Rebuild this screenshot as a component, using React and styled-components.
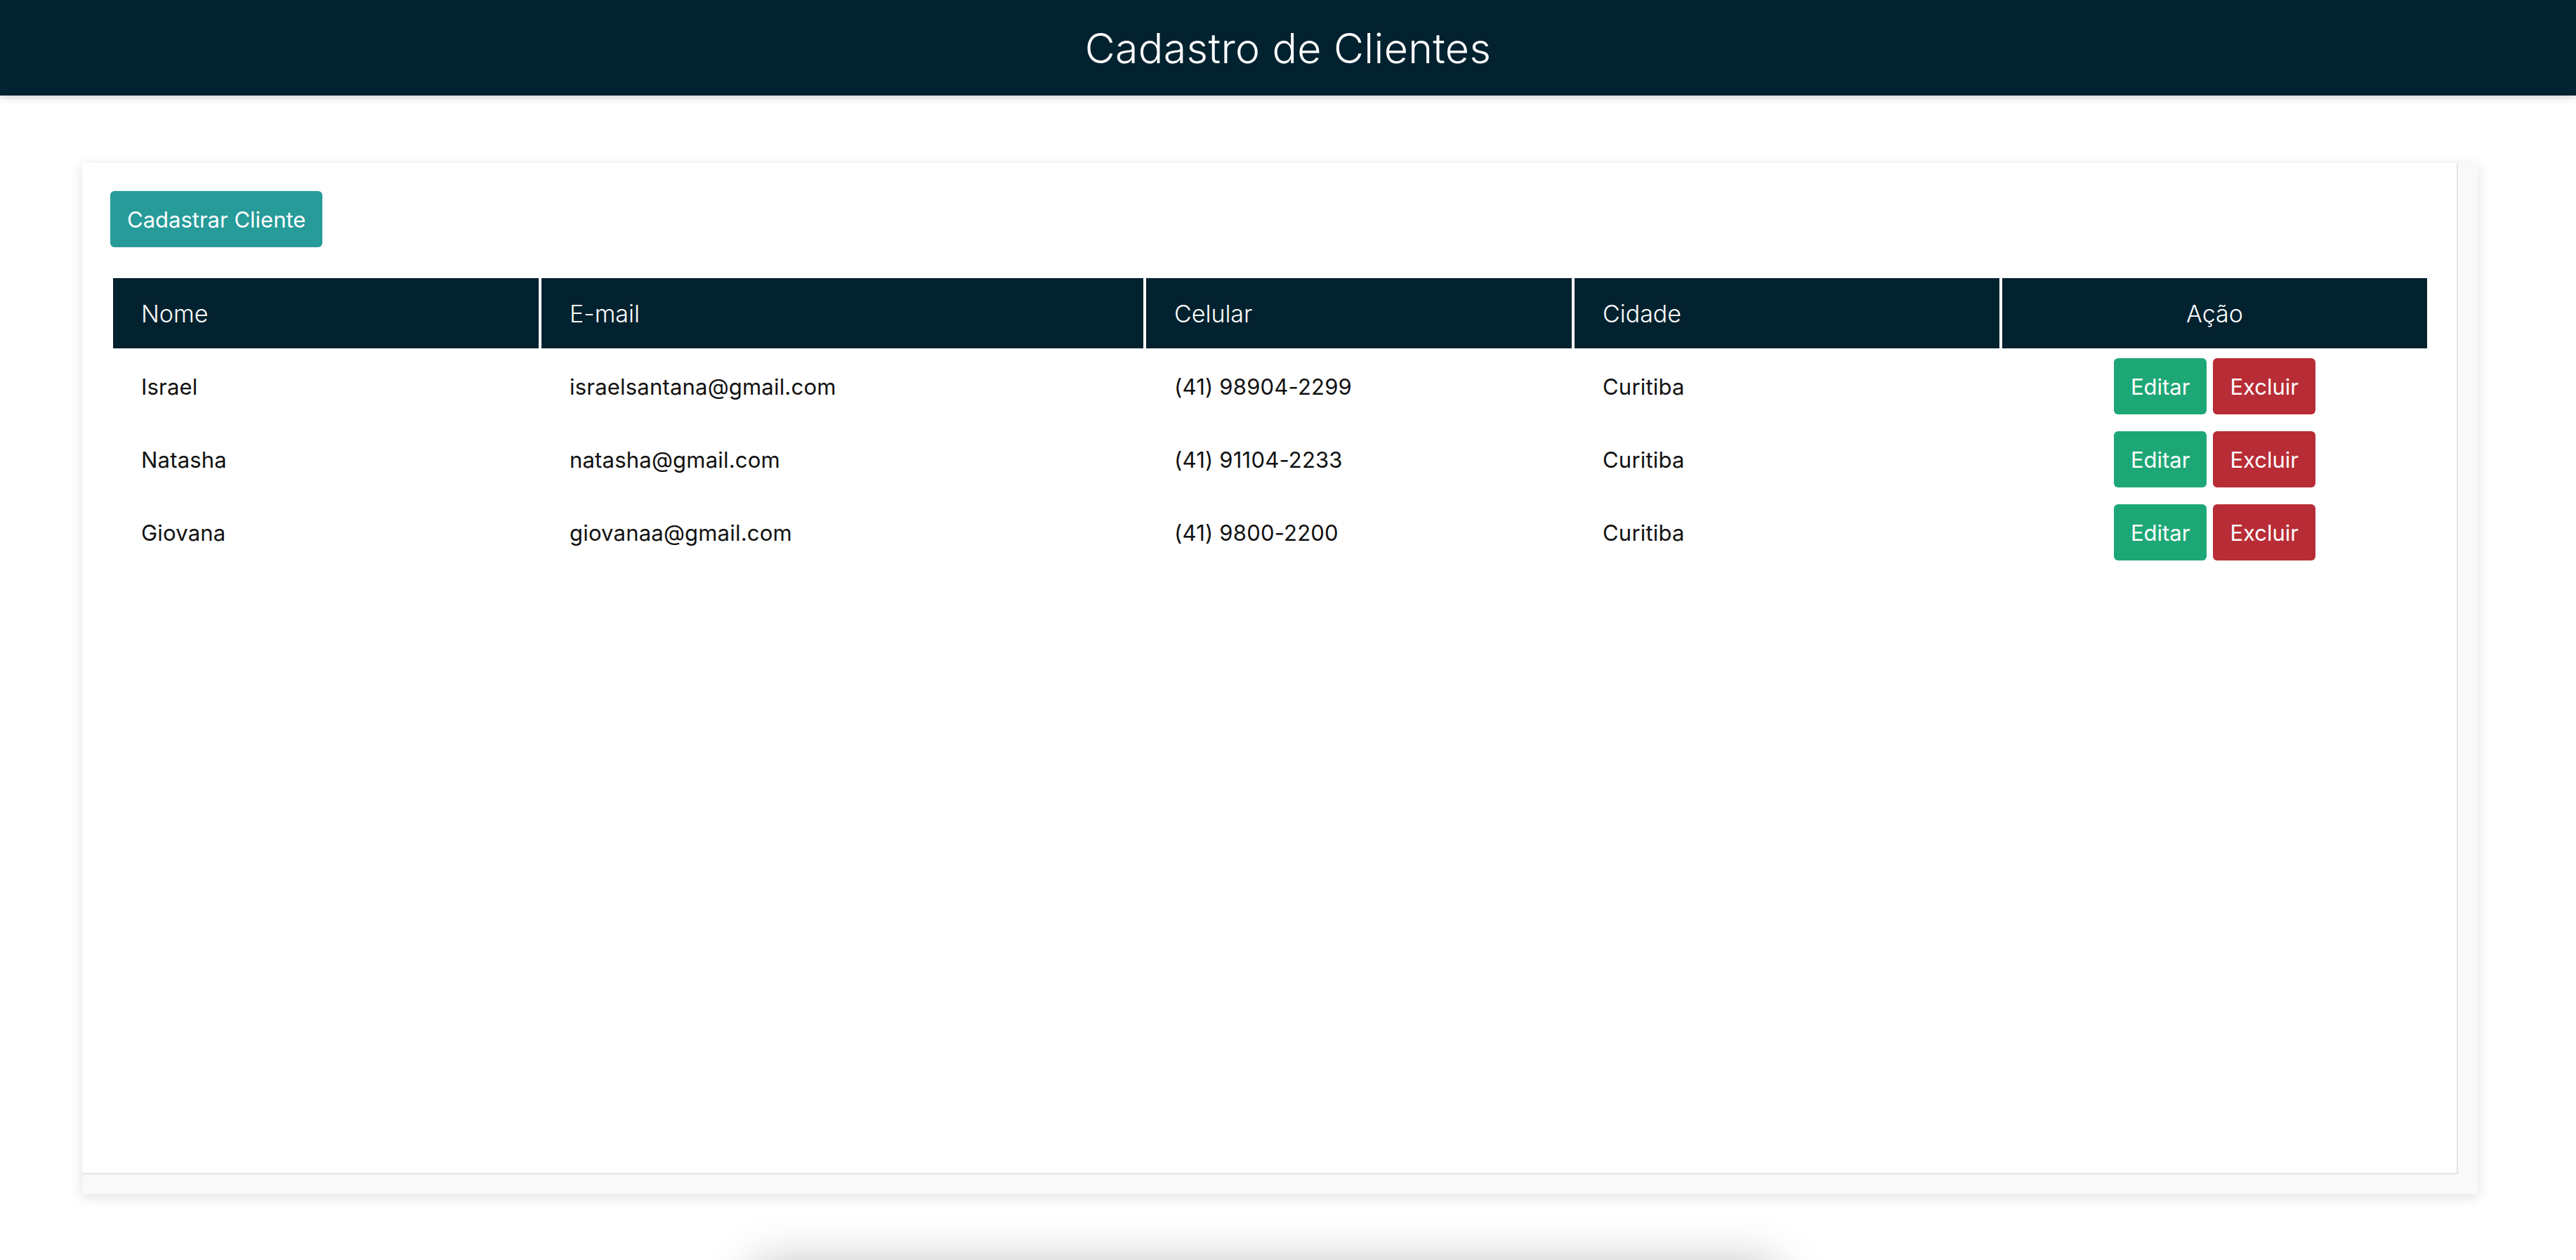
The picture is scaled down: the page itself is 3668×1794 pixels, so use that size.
import React from "react";
import styled, { createGlobalStyle } from "styled-components";

const GlobalStyle = createGlobalStyle`
  body {
    margin: 0;
    background: #ffffff;
    font-family: "Inter", "Liberation Sans", sans-serif;
    overflow: hidden;
  }
`;

const Header = styled.header`
  height: 136px;
  background: #03222f;
  box-shadow: 0 3px 10px rgba(0, 0, 0, 0.18);
  display: flex;
  align-items: center;
  justify-content: center;
`;

const Title = styled.h1`
  margin: 0;
  color: #ffffff;
  font-family: "Inter", "Liberation Sans", sans-serif;
  font-size: 59px;
  font-weight: 300;
  letter-spacing: 0.4px;
`;

const Main = styled.main`
  padding: 96px 140px 0 117px;
`;

const Card = styled.section`
  background: #f9f9f9;
  padding: 0 28px 28px 0;
  box-shadow: 0 4px 18px rgba(0, 0, 0, 0.12);
`;

const Panel = styled.div`
  background: #ffffff;
  height: 1440px;
  box-sizing: border-box;
  padding: 40px 38px 40px 40px;
  border-right: 2px solid #e4e4e4;
  border-bottom: 2px solid #e4e4e4;
`;

const Button = styled.button`
  font-family: "Inter", "Roboto", sans-serif;
  font-size: 31px;
  font-weight: 400;
  color: #ffffff;
  background: ${(p) => p.$bg};
  border: none;
  border-radius: 6px;
  height: 80px;
  padding: 0 24px;
  cursor: pointer;
`;

const AddButton = styled(Button)`
  margin-bottom: 40px;
`;

const Table = styled.table`
  width: 100%;
  table-layout: fixed;
  border-collapse: separate;
  border-spacing: 4px;
`;

const Th = styled.th`
  background: #03222f;
  color: #ffffff;
  height: 100px;
  padding: 0 40px;
  font-family: "Inter", "Liberation Sans", sans-serif;
  font-size: 34px;
  font-weight: 300;
  text-align: ${(p) => (p.$center ? "center" : "left")};
`;

const Td = styled.td`
  height: 100px;
  padding: 0 40px;
  font-size: 31px;
  font-weight: 400;
  color: #111111;
  letter-spacing: 0.2px;
  text-align: ${(p) => (p.$center ? "center" : "left")};
`;

const Actions = styled.div`
  display: flex;
  justify-content: center;
  gap: 9px;
`;

const Shade = styled.div`
  width: 1450px;
  height: 200px;
  margin: 112px 0 0 960px;
  background: #ffffff;
  box-shadow: 0 -8px 70px rgba(0, 0, 0, 0.3);
`;

const clients = [
  { nome: "Israel", email: "israelsantana@gmail.com", cel: "(41) 98904-2299", cidade: "Curitiba" },
  { nome: "Natasha", email: "natasha@gmail.com", cel: "(41) 91104-2233", cidade: "Curitiba" },
  { nome: "Giovana", email: "giovanaa@gmail.com", cel: "(41) 9800-2200", cidade: "Curitiba" },
];

const App = () => {
  return (
    <>
      <GlobalStyle />
      <Header>
        <Title>Cadastro de Clientes</Title>
      </Header>
      <Main>
        <Card>
          <Panel>
            <AddButton $bg="#269b99">Cadastrar Cliente</AddButton>
            <Table>
              <colgroup>
                <col style={{ width: "606px" }} />
                <col />
                <col style={{ width: "606px" }} />
                <col style={{ width: "605px" }} />
                <col style={{ width: "605px" }} />
              </colgroup>
              <thead>
                <tr>
                  <Th>Nome</Th>
                  <Th>E-mail</Th>
                  <Th>Celular</Th>
                  <Th>Cidade</Th>
                  <Th $center>Ação</Th>
                </tr>
              </thead>
              <tbody>
                {clients.map((c) => (
                  <tr key={c.email}>
                    <Td>{c.nome}</Td>
                    <Td>{c.email}</Td>
                    <Td>{c.cel}</Td>
                    <Td>{c.cidade}</Td>
                    <Td $center>
                      <Actions>
                        <Button $bg="#1ea776">Editar</Button>
                        <Button $bg="#b82c36">Excluir</Button>
                      </Actions>
                    </Td>
                  </tr>
                ))}
              </tbody>
            </Table>
          </Panel>
        </Card>
        <Shade />
      </Main>
    </>
  );
};

export default App;
